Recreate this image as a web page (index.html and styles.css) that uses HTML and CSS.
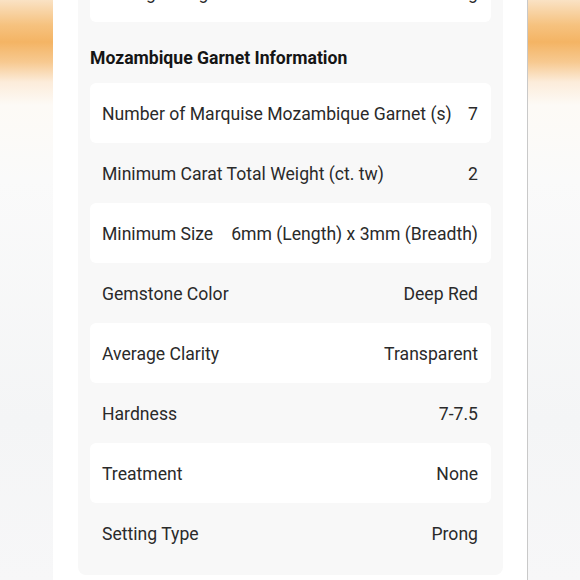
FILE: index.html
```html
<!DOCTYPE html>
<html>
<head>
<meta charset="utf-8">
<link rel="stylesheet" href="styles.css">
</head>
<body>
<div class="stage">
  <div class="blur blur-left"></div>
  <div class="screen">
    <div class="panel">
      <div class="row card"><span>Average Weight</span><span>3.2g</span></div>
      <h2 class="title">Mozambique Garnet Information</h2>
      <div class="row card"><span>Number of Marquise Mozambique Garnet (s)</span><span>7</span></div>
      <div class="row"><span>Minimum Carat Total Weight (ct. tw)</span><span>2</span></div>
      <div class="row card"><span>Minimum Size</span><span>6mm (Length) x 3mm (Breadth)</span></div>
      <div class="row"><span>Gemstone Color</span><span>Deep Red</span></div>
      <div class="row card"><span>Average Clarity</span><span>Transparent</span></div>
      <div class="row"><span>Hardness</span><span>7-7.5</span></div>
      <div class="row card"><span>Treatment</span><span>None</span></div>
      <div class="row"><span>Setting Type</span><span>Prong</span></div>
    </div>
  </div>
  <div class="edge"></div>
  <div class="blur blur-right"></div>
</div>
</body>
</html>
```
FILE: styles.css
```css
html, body {
  margin: 0;
  padding: 0;
  width: 580px;
  height: 580px;
  overflow: hidden;
  background: #ffffff;
}
.stage {
  display: flex;
  width: 580px;
  height: 580px;
  font-family: Roboto, "Noto Sans", sans-serif;
}
.blur {
  flex: none;
  height: 580px;
  background: linear-gradient(to bottom, #fae2c4 0px, #f6c27f 25px, #f4b464 42px, #f7c990 62px, #fcecda 82px, #fdfaf6 105px, #fafafa 180px, #f4f5f6 420px, #f7f7f8 580px);
}
.blur-left { width: 53px; }
.blur-right { width: 52px; }
.screen {
  flex: none;
  width: 474px;
  height: 580px;
  background: #ffffff;
  padding: 0 24px 0 25px;
  box-sizing: border-box;
  overflow: hidden;
}
.edge {
  flex: none;
  width: 1px;
  background: #c9c9c9;
}
.panel {
  margin-top: -50px;
  padding: 12px 12px 12px;
  background: #f8f8f8;
  border-radius: 0 0 8px 8px;
  display: flex;
  flex-direction: column;
}
.title {
  margin: 0;
  height: 61px;
  box-sizing: border-box;
  padding-top: 10px;
  display: flex;
  align-items: center;
  font-size: 17.6px;
  font-weight: 700;
  color: #151515;
}
.row {
  height: 60px;
  box-sizing: border-box;
  padding: 2px 13px 0 12px;
  display: flex;
  align-items: center;
  justify-content: space-between;
  font-size: 17.6px;
  color: #2a2a2a;
  gap: 12px;
  white-space: nowrap;
}
.card {
  background: #ffffff;
  border-radius: 6px;
}
```
